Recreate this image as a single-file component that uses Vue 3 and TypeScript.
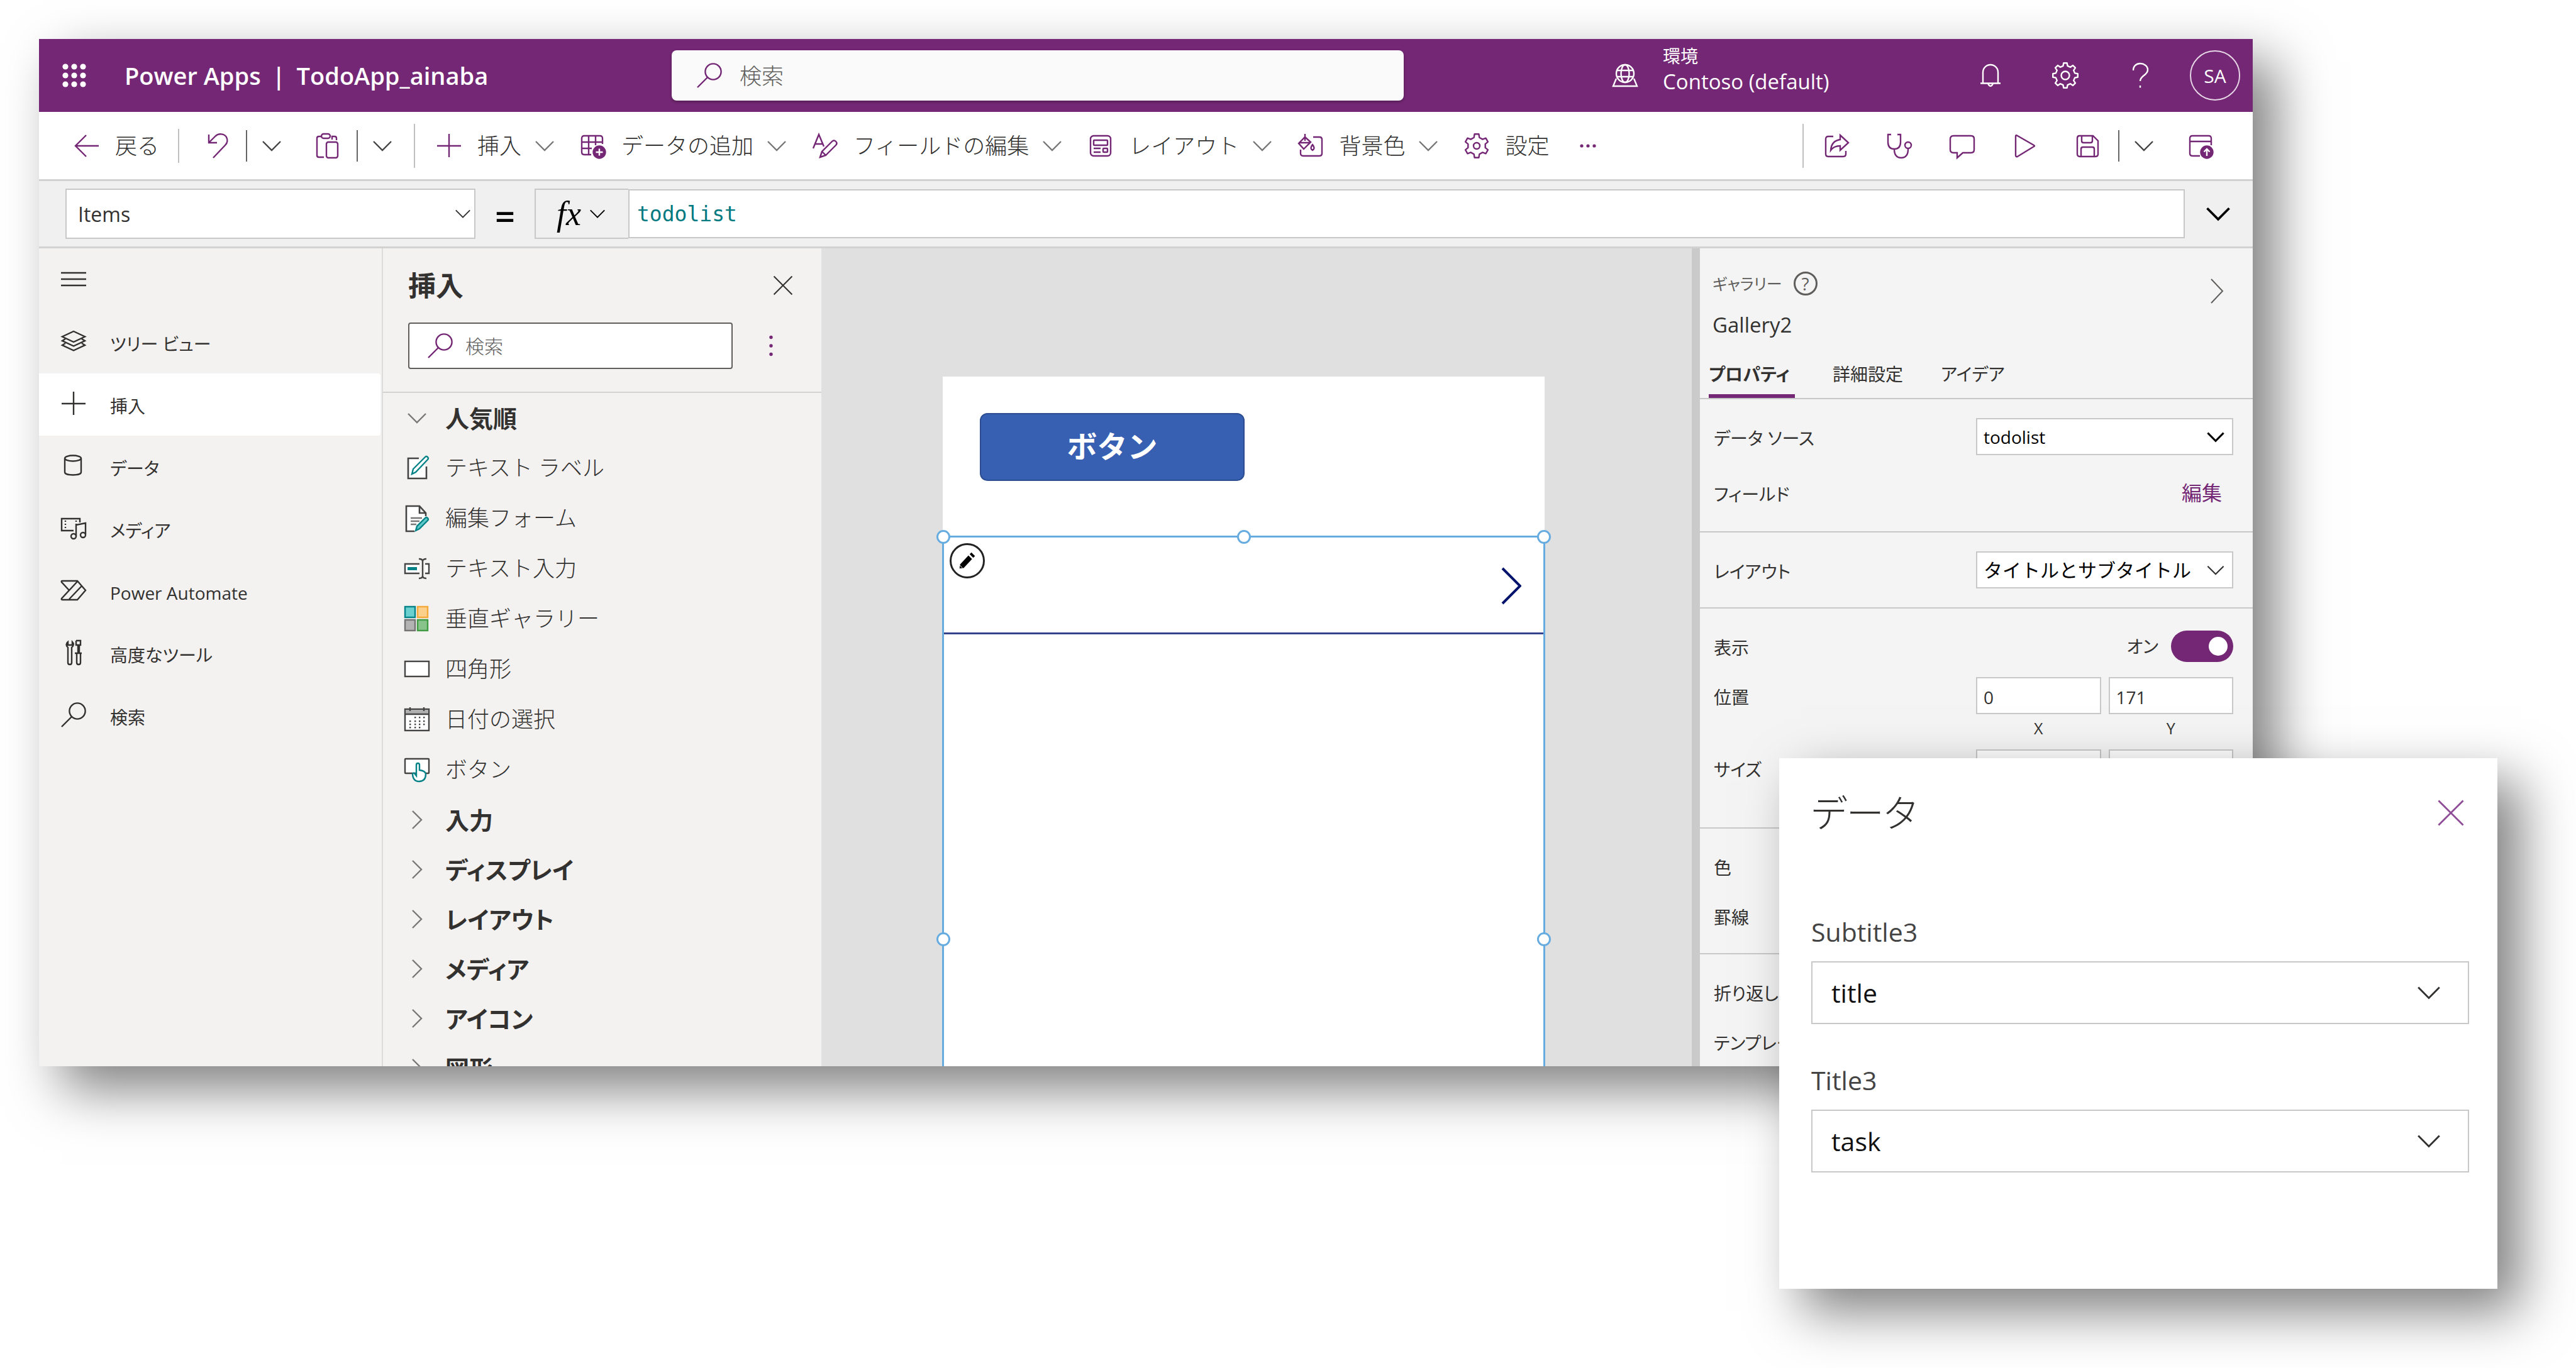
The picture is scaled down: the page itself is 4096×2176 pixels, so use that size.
<script setup lang="ts">
import { ref } from 'vue'

function gear(teeth: number, outer: number, inner: number, hole: number): string {
  const step = (Math.PI * 2) / teeth
  const pts: string[] = []
  for (let i = 0; i < teeth; i++) {
    const a = i * step - Math.PI / 2
    const corners: [number, number][] = [
      [a - step * 0.3, inner],
      [a - step * 0.17, outer],
      [a + step * 0.17, outer],
      [a + step * 0.3, inner],
    ]
    for (const [t, r] of corners) {
      pts.push(`${(20 + r * Math.cos(t)).toFixed(1)} ${(20 + r * Math.sin(t)).toFixed(1)}`)
    }
  }
  return `<path stroke-linejoin="round" d="M${pts.join('L')}Z"/><circle cx="20" cy="20" r="${hole}"/>`
}

const dots = [6, 20, 34]
  .flatMap((y) => [6, 20, 34].map((x) => `<circle cx="${x}" cy="${y}" r="4.6"/>`))
  .join('')

const calendarDots = [
  [17, 17], [24, 17], [31, 17], [9, 23], [17, 23], [24, 23], [31, 23],
  [9, 28], [17, 28], [24, 28], [31, 28], [9, 33], [17, 33], [24, 33],
]
  .map(([x, y]) => `<rect x="${x - 1}" y="${y - 1}" width="2.4" height="2.4"/>`)
  .join('')

const icons: Record<string, string> = {
  waffle: `<g fill="currentColor" stroke="none">${dots}</g>`,
  search: '<circle cx="26" cy="14" r="12.6"/><path d="M17 23 1 39"/>',
  globe:
    '<circle cx="20" cy="17" r="14"/><ellipse cx="20" cy="17" rx="6.5" ry="14"/><path d="M7 12h26M7 22h26M6 25 1 37h38l-5-12"/>',
  bell: '<path d="M8 32V15a12 12 0 0 1 24 0v17M4 32.500h32M16 33q4 8 8 0"/>',
  gear8: gear(8, 20, 15.5, 6.5),
  gear6: gear(6, 19, 14, 5),
  help: '<path d="M9 12C9 5 14 1 20 1s12 4 12 10c0 9-12 9-12 18"/><path d="M20 36v3.500"/>',
  back: '<path d="M19 3 2 20l17 17M2 20h37"/>',
  undo: '<path d="M5 2v13h13M5 15 15 5c6-6 15-4 18 1 3 6 1 10-2 13L12 39"/>',
  paste:
    '<path d="M27 10V5h4q3 0 3 3v3M10 5H6Q3 5 3 8v27q0 3 3 3h8"/><rect x="10" y="1" width="14" height="7" rx="3.500"/><rect x="18" y="14" width="18" height="25" rx="3"/>',
  plus: '<path d="M20 1v37M1 20h38"/>',
  data:
    '<path d="M35 17V8q0-4-4-4H6Q2 4 2 8v22q0 4 4 4h11M2 14h33M2 24h16M13 4v30M24 4v15"/><circle cx="30" cy="30" r="9.500" fill="currentColor"/><path d="M30 24.500v11M24.500 30h11" stroke="#fff"/>',
  pen: '<path d="M1 24 10 2l8 19M4 17h12M12 38l3-9 16-16q3-3 6 0t0 6L21 35zM15 29l6 6"/>',
  layout:
    '<rect x="4" y="4" width="32" height="32" rx="5"/><rect x="9" y="11" width="22" height="8" rx="1"/><path d="M9 24h11M9 30h11"/><rect x="24" y="24" width="7" height="6" rx="1"/>',
  paint:
    '<path d="M11 1v11M11 6 20 14 9 25 1 16zM1 15h18M24 6h10q4 0 4 4v22q0 4-4 4H8q-4 0-4-4v-6M23 18q5 6 0 9-5-3 0-9z"/>',
  more: '<g fill="currentColor" stroke="none"><circle cx="10" cy="20" r="2.600"/><circle cx="20" cy="20" r="2.600"/><circle cx="30" cy="20" r="2.600"/></g>',
  share:
    '<path d="M15 5H7q-4 0-4 4v24q0 4 4 4h24q4 0 4-4v-5M26 3l13 12-13 12v-7q-10 0-15 7 1-15 15-17z"/>',
  health:
    '<path d="M7 2H2v12q0 11 10 11t10-11V2h-5M12 25q0 14 11 14t11-14"/><circle cx="34" cy="19" r="5"/>',
  comment: '<path d="M6 4h28q5 0 5 5v17q0 5-5 5H21l-9 8v-8H6q-5 0-5-5V9q0-5 5-5z"/>',
  play: '<path d="M5 5q0-3 3-1l26 15q2 1 0 2L8 37q-3 1-3-2z"/>',
  save: '<path d="M6 4h22l8 8v21q0 4-4 4H7q-4 0-4-4V8q0-4 3-4zM10 4v8q0 3 3 3h11q3 0 3-3V4M9 37V25q0-3 3-3h15q3 0 3 3v12"/>',
  publish:
    '<path d="M36 19V8q0-4-4-4H6Q2 4 2 8v24q0 4 4 4h12M2 13h34"/><circle cx="29" cy="30" r="9.500" fill="currentColor"/><path d="M29 36V25m-4.500 4.500L29 25l4.500 4.500" stroke="#fff"/>',
  chevron: '<path d="M6 13 20 27 34 13"/>',
  chevronRight: '<path d="M13 6 27 20 13 34"/>',
  close: '<path d="M3 3 37 37M37 3 3 37"/>',
  kebab: '<g fill="currentColor" stroke="none"><circle cx="20" cy="5" r="3"/><circle cx="20" cy="20" r="3"/><circle cx="20" cy="35" r="3"/></g>',
  menu: '<path d="M0 10h40M0 20h40M0 30h40"/>',
  layers: '<path d="M20 4 38 12.500 20 21 2 12.500zM7 16 2 19l18 8.500L38 19l-5-3M7 23l-5 3 18 8.500L38 26l-5-3"/>',
  database: '<ellipse cx="19" cy="8" rx="13" ry="4.500"/><path d="M6 8v22c0 6 26 6 26 0V8"/>',
  media:
    '<path d="M20 24H1V5h29v6M7 8v2M7 13v2M7 18v2M24 8v2M24 13v1M24 33V15l15-3v18"/><circle cx="20" cy="33" r="4"/><circle cx="35" cy="31" r="4"/>',
  automate:
    '<path d="M2 5h24l13 15-13 15H2q-2 0-1-2L26 6M13 20 1 7q-1-2 1-2M13 34 33 13"/>',
  tools:
    '<path d="M11 12V36q0 3 3 3t3-3V12q5-5 1-9v5h-7V3q-5 4 0 9zM24 1h7v7h-2v13h4M24 1v7h3v13h-5M25 21v15q0 3 3 3t3-3V21"/>',
  label:
    '<path d="M35 18v19H6V5h17" stroke="#444" stroke-width="2.600" fill="#fff"/><path d="M12 30 14 22 33 3q2-2 4 0t0 4L18 27z" stroke="#038387" fill="#fff"/>',
  form:
    '<path d="M16 41H3V1h21l10 11v5M24 1v11h9" stroke="#444" stroke-width="2.600" fill="#fff"/><path d="M10 20h18M10 25h14M10 30h9" stroke="#777"/><path d="M18 40 20 33 33 20q2-2 4 0t0 4L24 37z" stroke="#038387" fill="#5cc8c8"/>',
  textInput:
    '<path d="M24 28H1V13h23M33 13h6v15h-6" stroke="#444" fill="#fff"/><rect x="5" y="18" width="15" height="5" fill="#038387" stroke="none"/><path d="M29 8v25M23 5q6 0 6 4 0-4 6-4M23 36q6 0 6-4 0 4 6 4" stroke="#444"/>',
  gallery:
    '<rect x="1" y="1" width="16" height="17" fill="#69cfcf" stroke="#038387"/><rect x="21" y="1" width="16" height="17" fill="#fbd08a" stroke="#f5a93a"/><rect x="1" y="22" width="16" height="17" fill="#b3b3b3" stroke="#737373"/><rect x="21" y="22" width="16" height="17" fill="#87c38a" stroke="#3f9c45"/>',
  rect: '<rect x="1" y="8" width="38" height="24" fill="#fff" stroke="#444"/>',
  calendar: `<rect x="1" y="4" width="38" height="34" fill="#fff" stroke="#444"/><rect x="2" y="5" width="36" height="7" fill="#b0b0b0" stroke="none"/><path d="M1 12h38M9 1v6M31 1v6" stroke="#444"/><g fill="#444" stroke="none">${calendarDots}</g>`,
  button:
    '<rect x="1" y="3" width="38" height="23" rx="1" fill="#fff" stroke="#444"/><path d="M19 30V13q0-3 2.500-3t2.500 3v8q9 1 10 6 0 12-11 12-9 0-10-11 0-3 3-2z" fill="#fff" stroke="#038387"/>',
  pencil:
    '<g fill="#000" stroke="none"><path d="M8 26 22 11l6 6-14 15-7 1zM24 9l3-3 6 6-3 3z" /></g><path d="M7 27l5 5" stroke="#fff" stroke-width="1"/>',
}

interface Command { icon: string; label: string; menu: boolean }
const commands: Command[] = [
  { icon: 'plus', label: '挿入', menu: true },
  { icon: 'data', label: 'データの追加', menu: true },
  { icon: 'pen', label: 'フィールドの編集', menu: true },
  { icon: 'layout', label: 'レイアウト', menu: true },
  { icon: 'paint', label: '背景色', menu: true },
  { icon: 'gear6', label: '設定', menu: false },
]

const nav = [
  { icon: 'layers', label: 'ツリー ビュー' },
  { icon: 'plus', label: '挿入' },
  { icon: 'database', label: 'データ' },
  { icon: 'media', label: 'メディア' },
  { icon: 'automate', label: 'Power Automate' },
  { icon: 'tools', label: '高度なツール' },
  { icon: 'search', label: '検索' },
]
const activeNav = ref('挿入')

const popular = [
  { icon: 'label', label: 'テキスト ラベル' },
  { icon: 'form', label: '編集フォーム' },
  { icon: 'textInput', label: 'テキスト入力' },
  { icon: 'gallery', label: '垂直ギャラリー' },
  { icon: 'rect', label: '四角形' },
  { icon: 'calendar', label: '日付の選択' },
  { icon: 'button', label: 'ボタン' },
]
const groups = ['入力', 'ディスプレイ', 'レイアウト', 'メディア', 'アイコン', '図形']

const tabs = ['プロパティ', '詳細設定', 'アイデア']
const activeTab = ref('プロパティ')

const formula = ref('todolist')
const visible = ref(true)
const posX = ref('0')
const posY = ref('171')
const sizeW = ref('')
const sizeH = ref('')

const bindings = [
  { id: 'subtitle', label: 'Subtitle3', value: 'title' },
  { id: 'title', label: 'Title3', value: 'task' },
]
</script>

<template>
  <div class="page">
    <div class="studio">
      <header class="brand">
        <div class="brand-left">
          <button class="plain" aria-label="アプリ起動ツール"><svg class="ico" viewBox="0 0 40 40" v-html="icons.waffle" /></button>
          <h1><span>Power Apps</span><span>|</span><span>TodoApp_ainaba</span></h1>
        </div>
        <label class="brand-search">
          <svg class="ico" viewBox="0 0 40 40" v-html="icons.search" />
          <input type="search" placeholder="検索" aria-label="検索" />
        </label>
        <div class="brand-right">
          <div class="env">
            <svg class="ico" viewBox="0 0 40 40" v-html="icons.globe" />
            <div class="env-text">
              <span class="env-label">環境</span>
              <span class="env-name">Contoso (default)</span>
            </div>
          </div>
          <div class="brand-actions">
            <button class="round" aria-label="通知"><svg class="ico" viewBox="0 0 40 40" v-html="icons.bell" /></button>
            <button class="round" aria-label="設定"><svg class="ico" viewBox="0 0 40 40" v-html="icons.gear8" /></button>
            <button class="round" aria-label="ヘルプ"><svg class="ico" viewBox="0 0 40 40" v-html="icons.help" /></button>
            <button class="round avatar">SA</button>
          </div>
        </div>
      </header>

      <div class="toolbar">
        <button class="cmd"><svg class="ico" viewBox="0 0 40 40" v-html="icons.back" /><span>戻る</span></button>
        <i class="rule short" />
        <button class="cmd undo" aria-label="元に戻す"><svg class="ico" viewBox="0 0 40 40" v-html="icons.undo" /></button>
        <i class="rule dark" />
        <button class="cmd" aria-label="元に戻す履歴"><svg class="ico chev" viewBox="0 0 40 40" v-html="icons.chevron" /></button>
        <button class="cmd paste" aria-label="貼り付け"><svg class="ico" viewBox="0 0 40 40" v-html="icons.paste" /></button>
        <i class="rule dark" />
        <button class="cmd" aria-label="貼り付けオプション"><svg class="ico chev" viewBox="0 0 40 40" v-html="icons.chevron" /></button>
        <i class="rule tall" />
        <div class="commands">
          <button v-for="c in commands" :key="c.label" class="cmd">
            <svg class="ico" viewBox="0 0 40 40" v-html="icons[c.icon]" />
            <span>{{ c.label }}</span>
            <svg v-if="c.menu" class="ico chev light" viewBox="0 0 40 40" v-html="icons.chevron" />
          </button>
          <button class="cmd" aria-label="その他"><svg class="ico" viewBox="0 0 40 40" v-html="icons.more" /></button>
        </div>
        <div class="toolbar-end">
          <i class="rule tall" />
          <div class="quick">
            <button class="cmd" aria-label="共有"><svg class="ico" viewBox="0 0 40 40" v-html="icons.share" /></button>
            <button class="cmd" aria-label="アプリ チェッカー"><svg class="ico" viewBox="0 0 40 40" v-html="icons.health" /></button>
            <button class="cmd" aria-label="コメント"><svg class="ico" viewBox="0 0 40 40" v-html="icons.comment" /></button>
            <button class="cmd" aria-label="プレビュー"><svg class="ico" viewBox="0 0 40 40" v-html="icons.play" /></button>
            <button class="cmd" aria-label="保存"><svg class="ico" viewBox="0 0 40 40" v-html="icons.save" /></button>
          </div>
          <i class="rule dark" />
          <button class="cmd" aria-label="保存オプション"><svg class="ico chev" viewBox="0 0 40 40" v-html="icons.chevron" /></button>
          <button class="cmd publish" aria-label="公開"><svg class="ico" viewBox="0 0 40 40" v-html="icons.publish" /></button>
        </div>
      </div>

      <div class="formula">
        <div class="pick property">
          <select aria-label="プロパティ"><option>Items</option></select>
          <svg class="ico" viewBox="0 0 40 40" v-html="icons.chevron" />
        </div>
        <span class="equals">=</span>
        <button class="fx" aria-label="関数"><em>fx</em><svg class="ico" viewBox="0 0 40 40" v-html="icons.chevron" /></button>
        <input v-model="formula" class="code" aria-label="数式" spellcheck="false" />
        <button class="plain expand" aria-label="数式バーを展開"><svg class="ico" viewBox="0 0 40 40" v-html="icons.chevron" /></button>
      </div>

      <div class="work">
        <nav class="side">
          <button class="side-item" aria-label="メニュー"><svg class="ico" viewBox="0 0 40 40" v-html="icons.menu" /></button>
          <button
            v-for="n in nav"
            :key="n.label"
            class="side-item"
            :class="{ active: n.label === activeNav }"
            @click="activeNav = n.label"
          >
            <svg class="ico" viewBox="0 0 40 40" v-html="icons[n.icon]" />
            <span>{{ n.label }}</span>
          </button>
        </nav>

        <aside class="insert">
          <div class="insert-head">
            <div class="insert-title">
              <h2>挿入</h2>
              <button class="plain" aria-label="閉じる"><svg class="ico" viewBox="0 0 40 40" v-html="icons.close" /></button>
            </div>
            <div class="insert-tools">
              <label class="insert-search">
                <svg class="ico" viewBox="0 0 40 40" v-html="icons.search" />
                <input type="search" placeholder="検索" aria-label="コントロールを検索" />
              </label>
              <button class="plain" aria-label="その他のオプション"><svg class="ico" viewBox="0 0 40 40" v-html="icons.kebab" /></button>
            </div>
          </div>
          <div class="insert-list">
            <button class="group"><svg class="ico" viewBox="0 0 40 40" v-html="icons.chevron" /><span>人気順</span></button>
            <button v-for="p in popular" :key="p.label" class="entry">
              <svg class="ico" viewBox="0 0 40 40" v-html="icons[p.icon]" /><span>{{ p.label }}</span>
            </button>
            <button v-for="g in groups" :key="g" class="group">
              <svg class="ico" viewBox="0 0 40 40" v-html="icons.chevronRight" /><span>{{ g }}</span>
            </button>
          </div>
        </aside>

        <main class="canvas">
          <div class="artboard">
            <button class="app-button">ボタン</button>
            <div class="gallery">
              <div class="template">
                <button class="edit" aria-label="テンプレートの編集"><svg viewBox="0 0 40 40" v-html="icons.pencil" /></button>
                <svg class="next" viewBox="0 0 32 60"><path d="M2 2 30 30 2 58" /></svg>
              </div>
              <i class="handle tl" /><i class="handle tc" /><i class="handle tr" />
              <i class="handle ml" /><i class="handle mr" />
            </div>
          </div>
        </main>

        <aside class="props">
          <div class="props-head">
            <div class="kind">
              <span>ギャラリー</span>
              <button class="hint" aria-label="ヘルプ">?</button>
              <button class="plain collapse" aria-label="折りたたむ"><svg viewBox="0 0 22 40"><path d="M2 1 20 20 2 39" /></svg></button>
            </div>
            <div class="name">Gallery2</div>
          </div>
          <div class="tabs">
            <button v-for="t in tabs" :key="t" :class="{ on: t === activeTab }" @click="activeTab = t">{{ t }}</button>
          </div>
          <section class="wide">
            <div class="row">
              <label for="source">データ ソース</label>
              <div class="pick strong">
                <select id="source"><option>todolist</option></select>
                <svg class="ico" viewBox="0 0 40 40" v-html="icons.chevron" />
              </div>
            </div>
            <div class="row"><span>フィールド</span><a href="#fields">編集</a></div>
          </section>
          <section>
            <div class="row">
              <label for="layout">レイアウト</label>
              <div class="pick">
                <select id="layout"><option>タイトルとサブタイトル</option></select>
                <svg class="ico" viewBox="0 0 40 40" v-html="icons.chevron" />
              </div>
            </div>
          </section>
          <section>
            <div class="row">
              <label for="visible">表示</label>
              <div class="switch"><span>オン</span><input id="visible" v-model="visible" type="checkbox" role="switch" /></div>
            </div>
            <div class="row">
              <span>位置</span>
              <div class="pair"><input id="pos-x" v-model="posX" /><input id="pos-y" v-model="posY" /></div>
            </div>
            <div class="captions"><label for="pos-x">X</label><label for="pos-y">Y</label></div>
            <div class="row size">
              <span>サイズ</span>
              <div class="pair"><input v-model="sizeW" aria-label="幅" /><input v-model="sizeH" aria-label="高さ" /></div>
            </div>
          </section>
          <section>
            <div class="row"><span>色</span></div>
            <div class="row"><span>罫線</span></div>
          </section>
          <section>
            <div class="row"><span>折り返しの</span></div>
            <div class="row"><span>テンプレート</span></div>
          </section>
        </aside>
      </div>
    </div>

    <div class="dialog" role="dialog" aria-labelledby="dialog-title">
      <div class="dialog-head">
        <h2 id="dialog-title">データ</h2>
        <button class="plain" aria-label="閉じる"><svg class="ico" viewBox="0 0 40 40" v-html="icons.close" /></button>
      </div>
      <div v-for="b in bindings" :key="b.id" class="field">
        <label :for="b.id">{{ b.label }}</label>
        <div class="pick">
          <select :id="b.id"><option>{{ b.value }}</option></select>
          <svg class="ico" viewBox="0 0 40 40" v-html="icons.chevron" />
        </div>
      </div>
    </div>
  </div>
</template>

<style>
body {
  background: #fff;
}
</style>

<style scoped>
.page {
  --purple: #742774;
  --ink: #323130;
  --line: #c8c8c8;
  --shadow: 36px 36px 80px rgba(0, 0, 0, 0.5);
  position: relative;
  box-sizing: border-box;
  height: 100vh;
  padding: 62px 514px 480px 62px;
  overflow: hidden;
  color: var(--ink);
  font-family: "Open Sans", "Noto Sans CJK JP", sans-serif;
}
.page *,
.page *::before {
  box-sizing: border-box;
}
.studio {
  display: flex;
  flex-direction: column;
  height: 100%;
  box-shadow: var(--shadow);
}
button,
input,
select {
  margin: 0;
  padding: 0;
  border: 0;
  border-radius: 0;
  background: none;
  color: inherit;
  font: inherit;
  outline: 0;
  appearance: none;
}
input[type="search"]::-webkit-search-cancel-button {
  display: none;
}
h1,
h2 {
  margin: 0;
}
.ico {
  display: block;
  flex: none;
  width: 40px;
  height: 40px;
  overflow: visible;
  fill: none;
  stroke: currentColor;
  stroke-width: 2.4;
}
.plain {
  display: flex;
  flex: none;
}

/* Brand bar */
.brand {
  display: grid;
  grid-template-columns: 1006fr 1164fr 1350fr;
  align-items: center;
  flex: none;
  height: 116px;
  background: var(--purple);
  color: #fff;
}
.brand-left {
  display: flex;
  align-items: center;
  gap: 60px;
  padding-left: 36px;
}
h1 {
  display: flex;
  gap: 18px;
  font-size: 38px;
  line-height: 52px;
  font-weight: 600;
}
.brand-search {
  display: flex;
  align-items: center;
  gap: 28px;
  height: 80px;
  padding: 0 40px;
  border-radius: 8px;
  background: #fafafa;
  box-shadow: 0 2px 4px rgba(0, 0, 0, 0.3);
  color: var(--purple);
  font-size: 35px;
  font-weight: 300;
}
.brand-search input,
.insert-search input {
  flex: 1;
  min-width: 0;
  color: var(--ink);
}
input::placeholder {
  color: #605e5c;
  opacity: 1;
}
.brand-right {
  display: flex;
  justify-content: space-between;
  align-items: center;
  height: 100%;
  padding: 0 20px 0 332px;
}
.env {
  display: flex;
  align-items: center;
  gap: 40px;
  height: 100%;
}
.env-text {
  display: flex;
  flex-direction: column;
  align-self: flex-start;
  padding-top: 10px;
  white-space: nowrap;
}
.env-label {
  font-size: 28px;
  line-height: 34px;
}
.env-name {
  font-size: 33px;
  line-height: 48px;
}
.brand-actions {
  display: flex;
  gap: 39px;
}
.round {
  display: grid;
  place-items: center;
  width: 80px;
  height: 80px;
}
.avatar {
  border: 2px solid #e6d6e6;
  border-radius: 50%;
  font-size: 30px;
}

/* Command bar */
.toolbar {
  display: flex;
  align-items: center;
  flex: none;
  height: 110px;
  padding: 0 62px 0 56px;
  border-bottom: 3px solid #d2d2d2;
  background: #fff;
  color: var(--purple);
}
.cmd {
  display: flex;
  align-items: center;
  flex: none;
  font-size: 35px;
  line-height: 48px;
  font-weight: 300;
}
.cmd span {
  margin-left: 25px;
  color: var(--ink);
}
.chev {
  width: 40px;
  margin: 0 -5px;
  color: #444;
}
.cmd span + .chev {
  margin-left: 17px;
}
.light {
  color: #777;
}
.rule {
  flex: none;
  width: 2px;
  background: #c0c0c0;
}
.short {
  height: 54px;
  margin: 0 42px 0 30px;
}
.dark {
  height: 50px;
  margin: 0 24px;
  background: #666;
}
.tall {
  height: 70px;
}
.paste {
  margin-left: 54px;
}
.paste + .dark {
  margin-left: 26px;
}
.cmd + .tall {
  margin: 0 34px 0 35px;
}
.commands {
  display: flex;
  gap: 42px;
}
.toolbar-end {
  display: flex;
  align-items: center;
  margin-left: auto;
}
.quick {
  display: flex;
  gap: 60px;
  margin-left: 32px;
}
.toolbar-end .dark {
  margin-left: 28px;
}
.publish {
  margin-left: 56px;
}

/* Formula bar */
.formula {
  display: flex;
  align-items: center;
  flex: none;
  height: 107px;
  padding: 0 30px 0 42px;
  border-bottom: 3px solid #d2d2d2;
  background: #f0f0f0;
}
.pick {
  display: grid;
  align-items: center;
  border: 2px solid var(--line);
  background: #fff;
}
.pick > * {
  grid-area: 1 / 1;
}
.pick select {
  width: 100%;
  height: 100%;
}
.pick .ico {
  justify-self: end;
  pointer-events: none;
}
.property {
  width: 652px;
  height: 80px;
}
.property select {
  padding-left: 18px;
  font-size: 32px;
}
.property .ico {
  width: 32px;
  margin-right: 2px;
}
.equals {
  width: 94px;
  padding-top: 6px;
  text-align: center;
  color: #000;
  font-size: 56px;
  line-height: 60px;
  font-weight: 600;
}
.fx {
  display: flex;
  align-items: center;
  justify-content: center;
  gap: 10px;
  width: 149px;
  height: 80px;
  border: 2px solid var(--line);
  border-right: 0;
  color: #000;
}
.fx em {
  font: italic 54px/60px "Liberation Serif", serif;
}
.fx .ico {
  width: 32px;
}
.code {
  flex: 1;
  min-width: 0;
  height: 78px;
  padding-left: 12px;
  border: 2px solid var(--line);
  background: #fff;
  color: #007a80;
  font-family: "DejaVu Sans Mono", monospace;
  font-size: 33px;
}
.expand {
  margin-left: 28px;
  color: #000;
}
.expand .ico {
  width: 50px;
  height: 64px;
  stroke-width: 3;
}

/* Left rail */
.work {
  display: flex;
  flex: 1;
  min-height: 0;
  overflow: hidden;
}
.side {
  flex: none;
  width: 547px;
  padding: 1px 2px 0 0;
  border-right: 2px solid #dcdcdc;
  background: #f3f2f1;
}
.side-item {
  display: flex;
  align-items: center;
  gap: 38px;
  width: 100%;
  height: 99px;
  padding-left: 35px;
  border-radius: 0 4px 4px 0;
  font-size: 28px;
  line-height: 40px;
  font-feature-settings: "palt";
}
.side-item .ico {
  margin-bottom: 4px;
}
.side-item span {
  padding-top: 4px;
}
.active {
  background: #fff;
}

/* Insert pane */
.insert {
  flex: none;
  width: 697px;
  background: #f3f2f1;
}
.insert-head {
  padding: 29px 40px 36px;
  border-bottom: 2px solid #d2d2d2;
}
.insert-title,
.insert-tools {
  display: flex;
  align-items: center;
  justify-content: space-between;
}
.insert-title {
  height: 60px;
  margin-bottom: 29px;
}
.insert-title .ico {
  width: 34px;
  height: 34px;
  margin-right: 4px;
}
h2 {
  font-size: 44px;
  line-height: 60px;
  font-weight: 700;
}
.insert-tools {
  padding-right: 20px;
}
.insert-search {
  display: flex;
  align-items: center;
  gap: 20px;
  width: 516px;
  height: 74px;
  padding: 0 29px;
  border: 2px solid #605e5c;
  border-radius: 4px;
  background: #fff;
  color: var(--purple);
  font-size: 30px;
  font-weight: 300;
}
.insert-tools .plain {
  color: var(--purple);
}
.insert-tools .plain .ico {
  height: 36px;
}
.group,
.entry {
  display: flex;
  align-items: center;
  gap: 25px;
  width: 100%;
  height: 80px;
  padding-left: 34px;
  font-size: 35px;
  line-height: 48px;
  font-weight: 300;
}
.group {
  height: 79px;
  font-size: 38px;
  font-weight: 700;
  font-feature-settings: "palt";
}
.group .ico {
  color: #777;
}

/* Canvas */
.canvas {
  flex: 1;
  min-width: 0;
  padding: 204px 234px 0 193px;
  background: #e0e0e0;
}
.artboard {
  position: relative;
  height: 100%;
  background: #fff;
}
.app-button {
  position: absolute;
  top: 58px;
  left: 59px;
  width: 421px;
  height: 108px;
  padding-bottom: 8px;
  border: 2px solid #2c4d92;
  border-radius: 12px;
  background: #3860b2;
  color: #fff;
  font-size: 48px;
  font-weight: 700;
}
.gallery {
  position: absolute;
  top: 253px;
  left: -1px;
  right: -1px;
  height: 1280px;
  border: 3px solid #66ace0;
}
.template {
  position: relative;
  height: 154px;
  border-bottom: 3px solid #34428c;
}
.edit {
  position: absolute;
  top: 9px;
  left: 9px;
  display: grid;
  place-items: center;
  width: 56px;
  height: 56px;
  border: 3px solid #222;
  border-radius: 50%;
}
.edit svg {
  width: 38px;
  height: 38px;
}
.next {
  position: absolute;
  top: 47px;
  right: 35px;
  width: 32px;
  height: 60px;
  fill: none;
  stroke: #00126b;
  stroke-width: 4;
}
.handle {
  position: absolute;
  width: 22px;
  height: 22px;
  border: 3px solid #66ace0;
  border-radius: 50%;
  background: #fff;
}
.tl,
.tc,
.tr {
  top: -12px;
}
.ml,
.mr {
  top: 628px;
}
.tl,
.ml {
  left: -12px;
}
.tr,
.mr {
  right: -12px;
}
.tc {
  left: calc(50% - 11px);
}

/* Properties */
.props {
  flex: none;
  width: 892px;
  border-left: 13px solid #cacaca;
  background: #f4f4f4;
  font-size: 28px;
  line-height: 40px;
  font-feature-settings: "palt";
}
.props-head {
  padding: 27px 31px 0 20px;
}
.kind {
  display: flex;
  align-items: center;
  gap: 18px;
  height: 58px;
  color: #605e5c;
  font-size: 25px;
}
.hint {
  width: 38px;
  height: 38px;
  border: 3px solid #605e5c;
  border-radius: 50%;
  font-size: 28px;
  line-height: 32px;
}
.collapse {
  margin: 24px 15px 0 auto;
}
.collapse svg {
  width: 22px;
  height: 40px;
  fill: none;
  stroke: #605e5c;
  stroke-width: 2;
}
.name {
  font-size: 33px;
  line-height: 74px;
}
.tabs {
  display: flex;
  gap: 60px;
  height: 81px;
  padding-left: 14px;
  border-bottom: 2px solid var(--line);
}
.tabs button {
  padding-top: 8px;
  border-bottom: 6px solid transparent;
}
.tabs .on {
  padding-right: 8px;
  border-color: var(--purple);
  font-weight: 700;
}
.props section {
  display: flex;
  flex-direction: column;
  gap: 20px;
  padding: 30px 31px 30px 22px;
  border-bottom: 2px solid var(--line);
}
.props section:last-child {
  border-bottom: 0;
}
.props .wide {
  gap: 30px;
  padding-bottom: 32px;
}
.row {
  display: flex;
  align-items: center;
  justify-content: space-between;
  height: 59px;
}
.row > span,
.row > label {
  padding-top: 4px;
}
.row .pick,
.pair {
  width: 409px;
  height: 59px;
}
.row select {
  padding-left: 10px;
  color: #000;
}
.row .pick select {
  font-size: 30px;
  font-feature-settings: normal;
}
.row .strong select {
  font-size: 28px;
}
.row .pick .ico {
  width: 36px;
  margin-right: 8px;
}
.strong .ico {
  color: #000;
  stroke-width: 3.4;
}
.row a {
  padding-right: 18px;
  color: var(--purple);
  font-size: 32px;
  text-decoration: none;
}
.switch {
  display: flex;
  align-items: center;
  gap: 20px;
}
.switch input {
  display: flex;
  align-items: center;
  justify-content: flex-end;
  width: 99px;
  height: 50px;
  padding-right: 9px;
  border-radius: 25px;
  background: var(--purple);
}
.switch input::before {
  width: 30px;
  height: 30px;
  border-radius: 50%;
  background: #fff;
  content: "";
}
.pair,
.captions {
  display: grid;
  grid-template-columns: 1fr 1fr;
  gap: 12px;
}
.pair input {
  min-width: 0;
  padding: 4px 0 0 10px;
  border: 2px solid var(--line);
  background: #fff;
}
.captions {
  align-self: flex-end;
  width: 409px;
  margin-top: -20px;
  font-size: 25px;
  line-height: 44px;
  text-align: center;
}
.size {
  margin: -8px 0 35px;
}

/* Data dialog */
.dialog {
  position: absolute;
  right: 125px;
  bottom: 126px;
  width: 1142px;
  padding: 42px 45px 185px 51px;
  background: #fff;
  box-shadow: var(--shadow);
}
.dialog-head {
  display: flex;
  align-items: center;
  justify-content: space-between;
  height: 90px;
  margin-bottom: 111px;
  padding-right: 6px;
}
.dialog-head h2 {
  font-size: 60px;
  line-height: 90px;
  font-weight: 300;
  font-feature-settings: "palt";
}
.dialog-head .ico {
  width: 46px;
  height: 46px;
  color: #8e4b96;
}
.field label {
  display: block;
  padding-bottom: 14px;
  color: #444;
  font-size: 41px;
  line-height: 66px;
}
.field + .field {
  padding-top: 56px;
}
.field .pick {
  height: 100px;
}
.field select {
  padding-left: 30px;
  color: #111;
  font-size: 41px;
}
.field .ico {
  width: 48px;
  height: 48px;
  margin-right: 38px;
}
</style>
